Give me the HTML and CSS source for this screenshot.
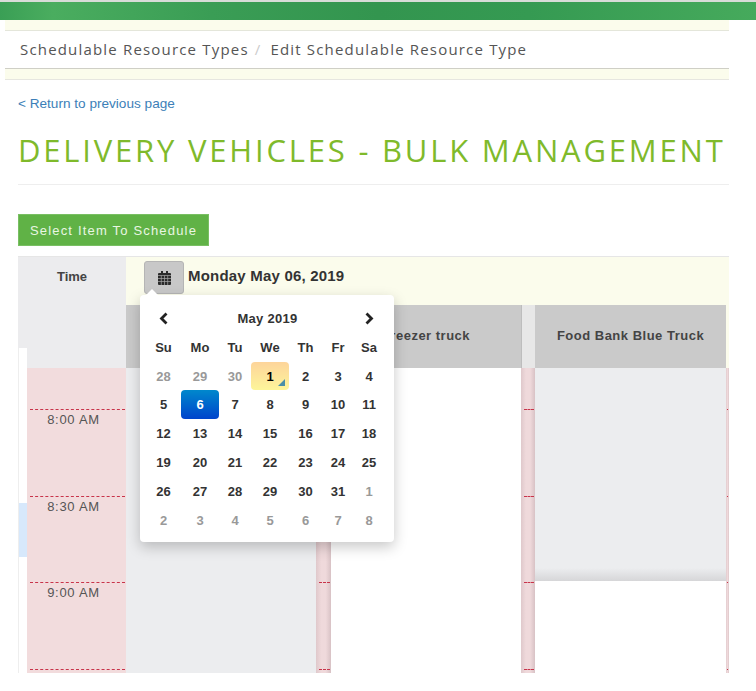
FILE: index.html
```html
<!DOCTYPE html>
<html lang="en">
<head>
    <meta charset="UTF-8">
    <meta name="viewport" content="width=device-width, initial-scale=1.0">
    <title>Edit Schedulable Resource Type</title>
    <link rel="stylesheet" href="styles.css">
</head>
<body>
    <div class="topbar"></div>

    <div class="crumb-band">
        <nav class="crumbs">
            <span>Schedulable Resource Types</span>
            <span class="crumb-sep">/</span>
            <span>Edit Schedulable Resource Type</span>
        </nav>
    </div>

    <main class="content">
        <a class="back-link" href="#">&lt; Return to previous page</a>
        <h1>DELIVERY VEHICLES - BULK MANAGEMENT</h1>
        <button class="select-btn" type="button">Select Item To Schedule</button>

        <div class="scheduler">
            <div class="time-col">
                <div class="time-head">Time</div>
                <div class="time-body">
                    <div class="strip"><div class="strip-now"></div></div>
                    <div class="time-labels">
                        <div class="time-spacer"></div>
                        <div class="slot slot-first"></div>
                        <div class="slot">8:00 AM</div>
                        <div class="slot">8:30 AM</div>
                        <div class="slot">9:00 AM</div>
                        <div class="slot"></div>
                    </div>
                </div>
            </div>

            <div class="main-col">
                <div class="date-bar">
                    <button class="cal-btn" type="button" aria-label="Open calendar">
                        <svg width="13" height="14" viewBox="0 0 13 14" aria-hidden="true">
                            <path fill="#2b2b2b" d="M3 0h2v2h3V0h2v2h2a1 1 0 0 1 1 1v10a1 1 0 0 1-1 1H1a1 1 0 0 1-1-1V3a1 1 0 0 1 1-1h2z"/>
                            <path stroke="#a8a8a8" stroke-width="0.7" fill="none" d="M0 4.500h13M0 7.500h13M0 10.500h13M3.300 4.500V14M6.500 4.500V14M9.700 4.500V14"/>
                        </svg>
                    </button>
                    <span class="date-label">Monday May 06, 2019</span>
                </div>

                <div class="columns">
                    <div class="resource">
                        <div class="resource-head"></div>
                        <div class="resource-body"><div class="blocked blocked-full"></div></div>
                    </div>
                    <div class="gutter">
                        <div class="gutter-head"></div>
                        <div class="slot slot-first"></div>
                        <div class="slot"></div>
                        <div class="slot"></div>
                        <div class="slot"></div>
                        <div class="slot"></div>
                    </div>
                    <div class="resource">
                        <div class="resource-head">Freezer truck</div>
                        <div class="resource-body"></div>
                    </div>
                    <div class="gutter gutter-narrow">
                        <div class="gutter-head"></div>
                        <div class="slot slot-first"></div>
                        <div class="slot"></div>
                        <div class="slot"></div>
                        <div class="slot"></div>
                        <div class="slot"></div>
                    </div>
                    <div class="resource resource-wide">
                        <div class="resource-head">Food Bank Blue Truck</div>
                        <div class="resource-body"><div class="blocked blocked-part"></div></div>
                    </div>
                    <div class="gutter gutter-end">
                        <div class="gutter-head"></div>
                        <div class="slot slot-first"></div>
                        <div class="slot"></div>
                        <div class="slot"></div>
                        <div class="slot"></div>
                        <div class="slot"></div>
                    </div>
                </div>
            </div>

            <div class="datepicker">
                <div class="dp-grid">
                    <button class="dp-nav" type="button" aria-label="Previous month">
                        <svg width="11" height="13" viewBox="0 0 11 13" aria-hidden="true"><path d="M8.500 1.500 3.500 6.500l5 5" fill="none" stroke="#222" stroke-width="2.800"/></svg>
                    </button>
                    <div class="dp-title">May 2019</div>
                    <button class="dp-nav" type="button" aria-label="Next month">
                        <svg width="11" height="13" viewBox="0 0 11 13" aria-hidden="true"><path d="M2.500 1.500l5 5-5 5" fill="none" stroke="#222" stroke-width="2.800"/></svg>
                    </button>

                    <div class="dp-dow">Su</div><div class="dp-dow">Mo</div><div class="dp-dow">Tu</div><div class="dp-dow">We</div><div class="dp-dow">Th</div><div class="dp-dow">Fr</div><div class="dp-dow">Sa</div>

                    <div class="dp-day old">28</div><div class="dp-day old">29</div><div class="dp-day old">30</div><div class="dp-day today">1</div><div class="dp-day">2</div><div class="dp-day">3</div><div class="dp-day">4</div>
                    <div class="dp-day">5</div><div class="dp-day active">6</div><div class="dp-day">7</div><div class="dp-day">8</div><div class="dp-day">9</div><div class="dp-day">10</div><div class="dp-day">11</div>
                    <div class="dp-day">12</div><div class="dp-day">13</div><div class="dp-day">14</div><div class="dp-day">15</div><div class="dp-day">16</div><div class="dp-day">17</div><div class="dp-day">18</div>
                    <div class="dp-day">19</div><div class="dp-day">20</div><div class="dp-day">21</div><div class="dp-day">22</div><div class="dp-day">23</div><div class="dp-day">24</div><div class="dp-day">25</div>
                    <div class="dp-day">26</div><div class="dp-day">27</div><div class="dp-day">28</div><div class="dp-day">29</div><div class="dp-day">30</div><div class="dp-day">31</div><div class="dp-day old">1</div>
                    <div class="dp-day old">2</div><div class="dp-day old">3</div><div class="dp-day old">4</div><div class="dp-day old">5</div><div class="dp-day old">6</div><div class="dp-day old">7</div><div class="dp-day old">8</div>
                </div>
            </div>
        </div>
    </main>
</body>
</html>
```
FILE: styles.css
```css
body {
    font-family: "Liberation Sans", Arial, sans-serif;
    margin: 0;
    background: #fff;
    color: #333;
}
button {
    font-family: inherit;
}
.topbar {
    height: 18px;
    border-top: 2px solid #d8dcd8;
    background: linear-gradient(90deg, #3a9f55 0%, #4aad5f 7%, #3a9d55 28%, #33954f 50%, #359a52 70%, #46aa5c 100%);
}
.crumb-band {
    margin: 0 27px 0 5px;
    padding: 10px 0;
    background: #fbfcec;
    border-bottom: 1px solid #e6e6e0;
}
.crumbs {
    display: flex;
    align-items: center;
    height: 37px;
    padding: 0 0 2px 15px;
    box-sizing: content-box;
    height: 35px;
    background: #fff;
    border-top: 1px solid #e4e6da;
    border-bottom: 1px solid #cfcfc6;
    font-family: "Open Sans", sans-serif;
    font-size: 15px;
    letter-spacing: 1.180px;
    color: #555;
}
.crumb-sep {
    margin: 0 9px 0 6px;
    color: #ccc;
}
.content {
    margin-right: 27px;
    padding-left: 18px;
}
.back-link {
    display: block;
    margin-top: 15px;
    line-height: 17px;
    font-size: 13.600px;
    color: #3d7fb8;
    text-decoration: none;
}
h1 {
    margin: 17px 0 0;
    padding-bottom: 13px;
    border-bottom: 1px solid #eee;
    font-family: "Open Sans", sans-serif;
    font-size: 31px;
    line-height: 42px;
    font-weight: 400;
    letter-spacing: 2.800px;
    color: #7fba2b;
    white-space: nowrap;
}
.select-btn {
    display: block;
    width: 191px;
    height: 32px;
    margin-top: 29px;
    padding: 0;
    background: #60b246;
    border: 1px solid #79bf63;
    color: #e9f6e3;
    font-size: 13px;
    letter-spacing: 1.180px;
}
.scheduler {
    position: relative;
    display: flex;
    height: 416px;
    margin-top: 10px;
    border-top: 1px solid #e6e6e6;
    overflow: hidden;
}
.time-col {
    display: flex;
    flex-direction: column;
    width: 108px;
    flex: none;
}
.time-head {
    height: 91px;
    flex: none;
    padding-top: 12px;
    box-sizing: border-box;
    background: #ececee;
    text-align: center;
    font-size: 13px;
    font-weight: 700;
    color: #444;
}
.time-body {
    display: flex;
    flex: none;
    height: 325px;
}
.strip {
    width: 9px;
    padding-top: 155px;
    box-sizing: border-box;
    background: #fff;
    border-left: 1px solid #eee;
}
.strip-now {
    height: 54px;
    background: #d7e8fb;
}
.time-labels {
    flex: 1;
    overflow: hidden;
    background: #f2dcdd;
}
.time-spacer {
    height: 20px;
    background: #ececee;
}
.slot {
    height: 86.500px;
    margin: 0 1px 0 3px;
    box-sizing: border-box;
    border-top: 1px dashed #c8344a;
    padding: 2px 8px 0 0;
    line-height: 16px;
    text-align: center;
    font-size: 13px;
    letter-spacing: 0.7px;
    color: #555;
}
.slot-first {
    height: 41px;
    border-top: 0;
}
.main-col {
    flex: 1;
    display: flex;
    flex-direction: column;
}
.date-bar {
    display: flex;
    align-items: flex-start;
    height: 48px;
    flex: none;
    padding: 4px 0 0 18px;
    box-sizing: border-box;
    background: #fbfcec;
}
.cal-btn {
    display: flex;
    align-items: center;
    justify-content: center;
    width: 40px;
    height: 33px;
    padding: 0;
    background: #c8c8c8;
    border: 1px solid #b5b5b5;
    border-radius: 3px;
}
.date-label {
    margin: 6px 0 0 4px;
    font-size: 15px;
    letter-spacing: 0.2px;
    font-weight: 700;
    color: #333;
}
.columns {
    display: flex;
    flex: 1;
    min-height: 0;
}
.resource {
    display: flex;
    flex-direction: column;
    width: 190px;
    flex: none;
}
.resource-wide {
    width: 191px;
}
.resource-head {
    display: flex;
    align-items: center;
    justify-content: center;
    height: 63px;
    flex: none;
    padding-bottom: 2px;
    box-sizing: border-box;
    background: #cacaca;
    font-size: 13px;
    font-weight: 700;
    letter-spacing: 0.5px;
    color: #444;
}
.resource-body {
    flex: 1;
    background: #fff;
}
.blocked {
    background: #ecedef;
}
.blocked-full {
    height: 100%;
}
.blocked-part {
    height: 213px;
    background: linear-gradient(#ecedef 0, #ecedef 200px, #d6d6d8 213px);
}
.gutter {
    width: 15px;
    flex: none;
    overflow: hidden;
    background: linear-gradient(90deg, #dfc8cb 0, #efd9db 35%, #efd9db 65%, #d8c2c5 100%);
}
.gutter-narrow {
    width: 14px;
}
.gutter-end {
    width: 3px;
}
.gutter-end .slot {
    margin: 0 1px;
    padding: 0;
}
.gutter-head {
    height: 63px;
    background: #e7e7e7;
    border-left: 1px solid #bdbdbd;
}
.gutter-end .gutter-head {
    background: #fbfcec;
    border-left: 0;
}
.datepicker {
    position: absolute;
    left: 122px;
    top: 38px;
    width: 254px;
    height: 247px;
    box-sizing: border-box;
    padding: 9px 10px 0 6px;
    background: #fff;
    border-radius: 4px;
    box-shadow: 0 5px 14px rgba(0, 0, 0, 0.22);
}
.datepicker::before {
    content: "";
    position: absolute;
    left: 6px;
    top: -6px;
    border-left: 6px solid transparent;
    border-right: 6px solid transparent;
    border-bottom: 6px solid #fff;
}
.dp-grid {
    display: grid;
    grid-template-columns: 35px 38px 32px 38px 33px 32px 30px;
    grid-auto-rows: 28.800px;
    text-align: center;
    font-size: 13px;
    font-weight: 700;
    color: #333;
}
.dp-nav {
    display: flex;
    align-items: center;
    justify-content: center;
    padding: 0;
    background: none;
    border: 0;
}
.dp-title {
    grid-column: span 5;
    line-height: 29px;
    font-size: 13px;
    letter-spacing: 0.3px;
}
.dp-dow,
.dp-day {
    line-height: 29px;
}
.old {
    color: #999;
}
.today {
    position: relative;
    background: linear-gradient(#fdd49a, #fdf59a);
    border-radius: 4px;
    color: #000;
}
.today::after {
    content: "";
    position: absolute;
    right: 4px;
    bottom: 4px;
    border-left: 7px solid transparent;
    border-bottom: 7px solid #4a8fa8;
}
.active {
    background: linear-gradient(#0088cc, #0044cc);
    border-radius: 4px;
    color: #fff;
}
```
